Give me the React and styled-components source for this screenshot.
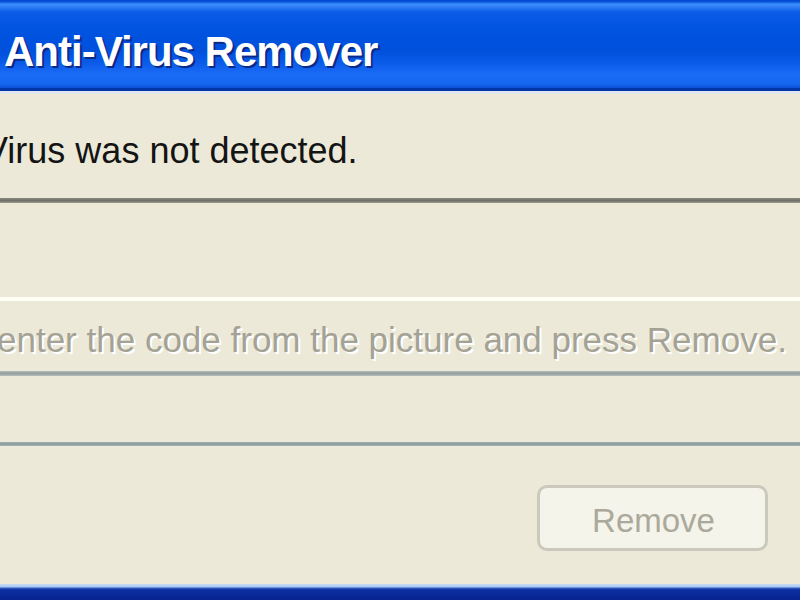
import React from "react";
import styled, { createGlobalStyle } from "styled-components";

const GlobalStyle = createGlobalStyle`
  html, body {
    margin: 0;
    padding: 0;
    background: #ece9d8;
    overflow: hidden;
  }
`;

const Window = styled.div`
  width: 800px;
  height: 600px;
  display: flex;
  flex-direction: column;
  background: #ece9d8;
  font-family: "Liberation Sans", Arial, sans-serif;
  overflow: hidden;
`;

const TitleBar = styled.div`
  height: 91px;
  flex-shrink: 0;
  display: flex;
  align-items: center;
  padding-left: 4px;
  padding-top: 2px;
  box-sizing: border-box;
  background: linear-gradient(
    to bottom,
    #0048d0 0px,
    #0a56dc 2px,
    #3d8ffc 4px,
    #2f7ef6 7px,
    #0c5ce8 12px,
    #0054e0 30px,
    #0050dc 50px,
    #0a5ae8 62px,
    #1a6bf6 74px,
    #1766f0 84px,
    #0a4fd6 88px
  );
  border-bottom: 3px solid #0036a8;
  box-shadow: 0 3px 0 #dfe6f0;
`;

const Title = styled.h1`
  margin: 0;
  font-size: 42px;
  font-weight: 700;
  letter-spacing: -1px;
  color: #ffffff;
  text-shadow: 2px 2px 0 #0a2a86;
  line-height: 1;
  position: relative;
  top: 7px;
`;

const Body = styled.div`
  flex: 1;
  display: flex;
  flex-direction: column;
  padding-top: 40px;
`;

const Message = styled.p`
  margin: 0 0 27px -16px;
  font-size: 36px;
  line-height: 40px;
  color: #141414;
  white-space: nowrap;
`;

const Rule = styled.div`
  height: ${(p) => p.$size}px;
  flex-shrink: 0;
  background: ${(p) => p.$color};
  margin-bottom: ${(p) => p.$after}px;
`;

const Hint = styled.p`
  margin: 0 0 11px -3px;
  font-size: 35px;
  line-height: 40px;
  color: #a3a294;
  text-shadow: 2px 2px 0 #ffffff;
  white-space: nowrap;
`;

const Footer = styled.div`
  display: flex;
  justify-content: flex-end;
  padding-right: 32px;
`;

const Button = styled.button`
  width: 231px;
  height: 66px;
  box-sizing: border-box;
  border: 3px solid #cbc9bc;
  border-radius: 10px;
  background: #f5f4ea;
  color: #aaa99c;
  font-family: "Liberation Sans", Arial, sans-serif;
  font-size: 33px;
  padding: 5px 0 0 2px;
  cursor: default;
`;

const BottomFrame = styled.div`
  height: 16px;
  flex-shrink: 0;
  background: linear-gradient(
    to bottom,
    #c8ddf6 0px,
    #a9c6ee 3px,
    #2f5cc4 4px,
    #0c2e9e 6px,
    #06248f 16px
  );
`;

export default function App() {
  return (
    <>
      <GlobalStyle />
      <Window>
        <TitleBar>
          <Title>Anti-Virus Remover</Title>
        </TitleBar>
        <Body>
          <Message>Virus was not detected.</Message>
          <Rule
            $size={5}
            $after={94}
            $color="linear-gradient(to bottom, #8a8a80, #6f6f66 50%, #9a9a90)"
          />
          <Rule $size={4} $after={19} $color="#fffff6" />
          <Hint>enter the code from the picture and press Remove.</Hint>
          <Rule
            $size={5}
            $after={66}
            $color="linear-gradient(to bottom, #b4baba, #959e9e 50%, #b8bebe)"
          />
          <Rule
            $size={4}
            $after={39}
            $color="linear-gradient(to bottom, #a4b2b2, #879a9a 50%, #a8b6b6)"
          />
          <Footer>
            <Button disabled>Remove</Button>
          </Footer>
        </Body>
        <BottomFrame />
      </Window>
    </>
  );
}
